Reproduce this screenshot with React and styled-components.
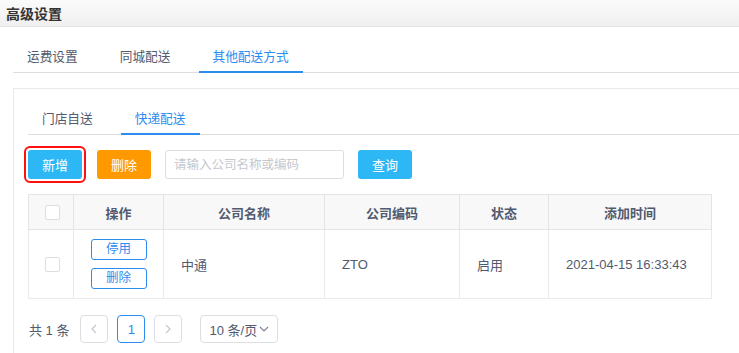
import React from 'react';
import styled, { createGlobalStyle } from 'styled-components';

const GlobalStyle = createGlobalStyle`
  html, body {
    margin: 0;
    padding: 0;
    background: #fff;
  }
  body {
    font-family: "Liberation Sans", "Noto Sans CJK SC", sans-serif;
    font-size: 13px;
    color: #515a6e;
    overflow: hidden;
  }
  * {
    box-sizing: border-box;
  }
`;

const Page = styled.div`
  width: 739px;
  height: 353px;
  overflow: hidden;
`;

const Header = styled.div`
  height: 27px;
  padding-left: 6px;
  display: flex;
  align-items: center;
  background: linear-gradient(#fbfbfb, #efefef);
  border-bottom: 1px solid #e3e3e3;
  font-size: 14px;
  font-weight: bold;
  color: #333;
`;

const Body = styled.div`
  padding: 12px 0 0 13px;
`;

const TabNav = styled.div`
  display: flex;
  gap: 14px;
  border-bottom: 1px solid #dcdee2;
`;

const Tab = styled.div`
  height: 34px;
  padding: 0 14px;
  margin-bottom: -1px;
  display: flex;
  align-items: center;
  font-size: 12.7px;
  color: ${(p) => (p.active ? '#2d8cf0' : '#515a6e')};
  border-bottom: 2px solid ${(p) => (p.active ? '#2d8cf0' : 'transparent')};
`;

const Card = styled.div`
  margin-top: 15px;
  margin-right: -20px;
  padding: 12px 0 30px 14px;
  border: 1px solid #e8eaec;
`;

const Toolbar = styled.div`
  display: flex;
  align-items: center;
  gap: 14px;
  margin-top: 15px;
`;

const Button = styled.button`
  width: 54px;
  height: 29px;
  padding: 0;
  border: none;
  border-radius: 3px;
  background: ${(p) => p.color};
  color: #fff;
  font-family: inherit;
  font-size: 13px;
  cursor: pointer;
`;

const Highlight = styled.span`
  display: inline-flex;
  outline: 2.5px solid #ff1010;
  outline-offset: 2px;
  border-radius: 2px;
  margin-right: 1px;
`;

const SearchInput = styled.input`
  width: 179px;
  height: 29px;
  padding: 0 8px;
  border: 1px solid #dcdee2;
  border-radius: 3px;
  font-family: inherit;
  font-size: 12.5px;
  color: #515a6e;
  outline: none;

  &::placeholder {
    color: #c5c8ce;
  }
`;

const Table = styled.table`
  margin-top: 15px;
  width: 683px;
  border-collapse: collapse;
  table-layout: fixed;
  border: 1px solid #e3e4e6;
`;

const Th = styled.th`
  height: 35px;
  background: #f8f8f9;
  border: 1px solid #e3e4e6;
  font-weight: bold;
  font-size: 13px;
  color: #515a6e;
  text-align: center;
`;

const Td = styled.td`
  height: 69px;
  padding: 0 0 0 ${(p) => (p.center ? 0 : 17)}px;
  border: 1px solid #e8eaec;
  font-size: 13px;
  color: #515a6e;
  text-align: ${(p) => (p.center ? 'center' : 'left')};
`;

const Checkbox = styled.span`
  display: inline-block;
  width: 15px;
  height: 15px;
  margin-left: 2px;
  vertical-align: middle;
  border: 1px solid #dcdee2;
  border-radius: 2px;
  background: #fff;
`;

const ActionStack = styled.div`
  display: flex;
  flex-direction: column;
  align-items: center;
  gap: 8px;
`;

const LinkButton = styled.button`
  width: 56px;
  height: 21px;
  padding: 0;
  border: 1px solid #2d8cf0;
  border-radius: 3px;
  background: #fff;
  color: #2d8cf0;
  font-family: inherit;
  font-size: 12.5px;
  line-height: 19px;
`;

const Pager = styled.div`
  display: flex;
  align-items: center;
  margin-top: 16px;
  padding-left: 1px;
  font-size: 13px;
  color: #515a6e;
`;

const Total = styled.span`
  margin-right: 11px;
`;

const PageItem = styled.span`
  width: 28px;
  height: 28px;
  margin-right: 9px;
  display: inline-flex;
  align-items: center;
  justify-content: center;
  border: 1px solid ${(p) => (p.active ? '#2d8cf0' : '#dcdee2')};
  border-radius: 4px;
  color: ${(p) => (p.active ? '#2d8cf0' : '#c5c8ce')};
  font-size: 13px;
`;

const SizeSelect = styled.span`
  width: 78px;
  height: 28px;
  margin-left: 9px;
  padding-left: 8px;
  display: inline-flex;
  align-items: center;
  gap: 2px;
  border: 1px solid #dcdee2;
  border-radius: 4px;
  color: #515a6e;
`;

const Chevron = ({ dir }) => {
  const d = {
    left: 'M6 1 L2 5 L6 9',
    right: 'M2 1 L6 5 L2 9',
    down: 'M1 2 L5 6 L9 2',
  }[dir];
  const size = dir === 'down' ? [10, 8] : [8, 10];
  return (
    <svg width={size[0]} height={size[1]} viewBox={`0 0 ${size[0]} ${size[1]}`} fill="none">
      <path d={d} stroke={dir === 'down' ? '#808695' : '#c5c8ce'} strokeWidth="1.2" />
    </svg>
  );
};

const columns = [
  { key: 'check', width: 45 },
  { key: 'op', width: 90, title: '操作' },
  { key: 'name', width: 161, title: '公司名称' },
  { key: 'code', width: 135, title: '公司编码' },
  { key: 'status', width: 89, title: '状态' },
  { key: 'time', width: 163, title: '添加时间' },
];

const rows = [{ name: '中通', code: 'ZTO', status: '启用', time: '2021-04-15 16:33:43' }];

const App = () => (
  <Page>
    <GlobalStyle />
    <Header>高级设置</Header>
    <Body>
      <TabNav>
        <Tab>运费设置</Tab>
        <Tab>同城配送</Tab>
        <Tab active>其他配送方式</Tab>
      </TabNav>
      <Card>
        <TabNav>
          <Tab>门店自送</Tab>
          <Tab active>快递配送</Tab>
        </TabNav>
        <Toolbar>
          <Highlight>
            <Button color="#2db7f5">新增</Button>
          </Highlight>
          <Button color="#ff9900">删除</Button>
          <SearchInput placeholder="请输入公司名称或编码" />
          <Button color="#2db7f5">查询</Button>
        </Toolbar>
        <Table>
          <colgroup>
            {columns.map((c) => (
              <col key={c.key} style={{ width: c.width }} />
            ))}
          </colgroup>
          <thead>
            <tr>
              {columns.map((c) => (
                <Th key={c.key}>{c.key === 'check' ? <Checkbox /> : c.title}</Th>
              ))}
            </tr>
          </thead>
          <tbody>
            {rows.map((r) => (
              <tr key={r.code}>
                <Td center>
                  <Checkbox />
                </Td>
                <Td center>
                  <ActionStack>
                    <LinkButton>停用</LinkButton>
                    <LinkButton>删除</LinkButton>
                  </ActionStack>
                </Td>
                <Td>{r.name}</Td>
                <Td>{r.code}</Td>
                <Td>{r.status}</Td>
                <Td>{r.time}</Td>
              </tr>
            ))}
          </tbody>
        </Table>
        <Pager>
          <Total>共 1 条</Total>
          <PageItem>
            <Chevron dir="left" />
          </PageItem>
          <PageItem active>1</PageItem>
          <PageItem>
            <Chevron dir="right" />
          </PageItem>
          <SizeSelect>
            10 条/页
            <Chevron dir="down" />
          </SizeSelect>
        </Pager>
      </Card>
    </Body>
  </Page>
);

export default App;
